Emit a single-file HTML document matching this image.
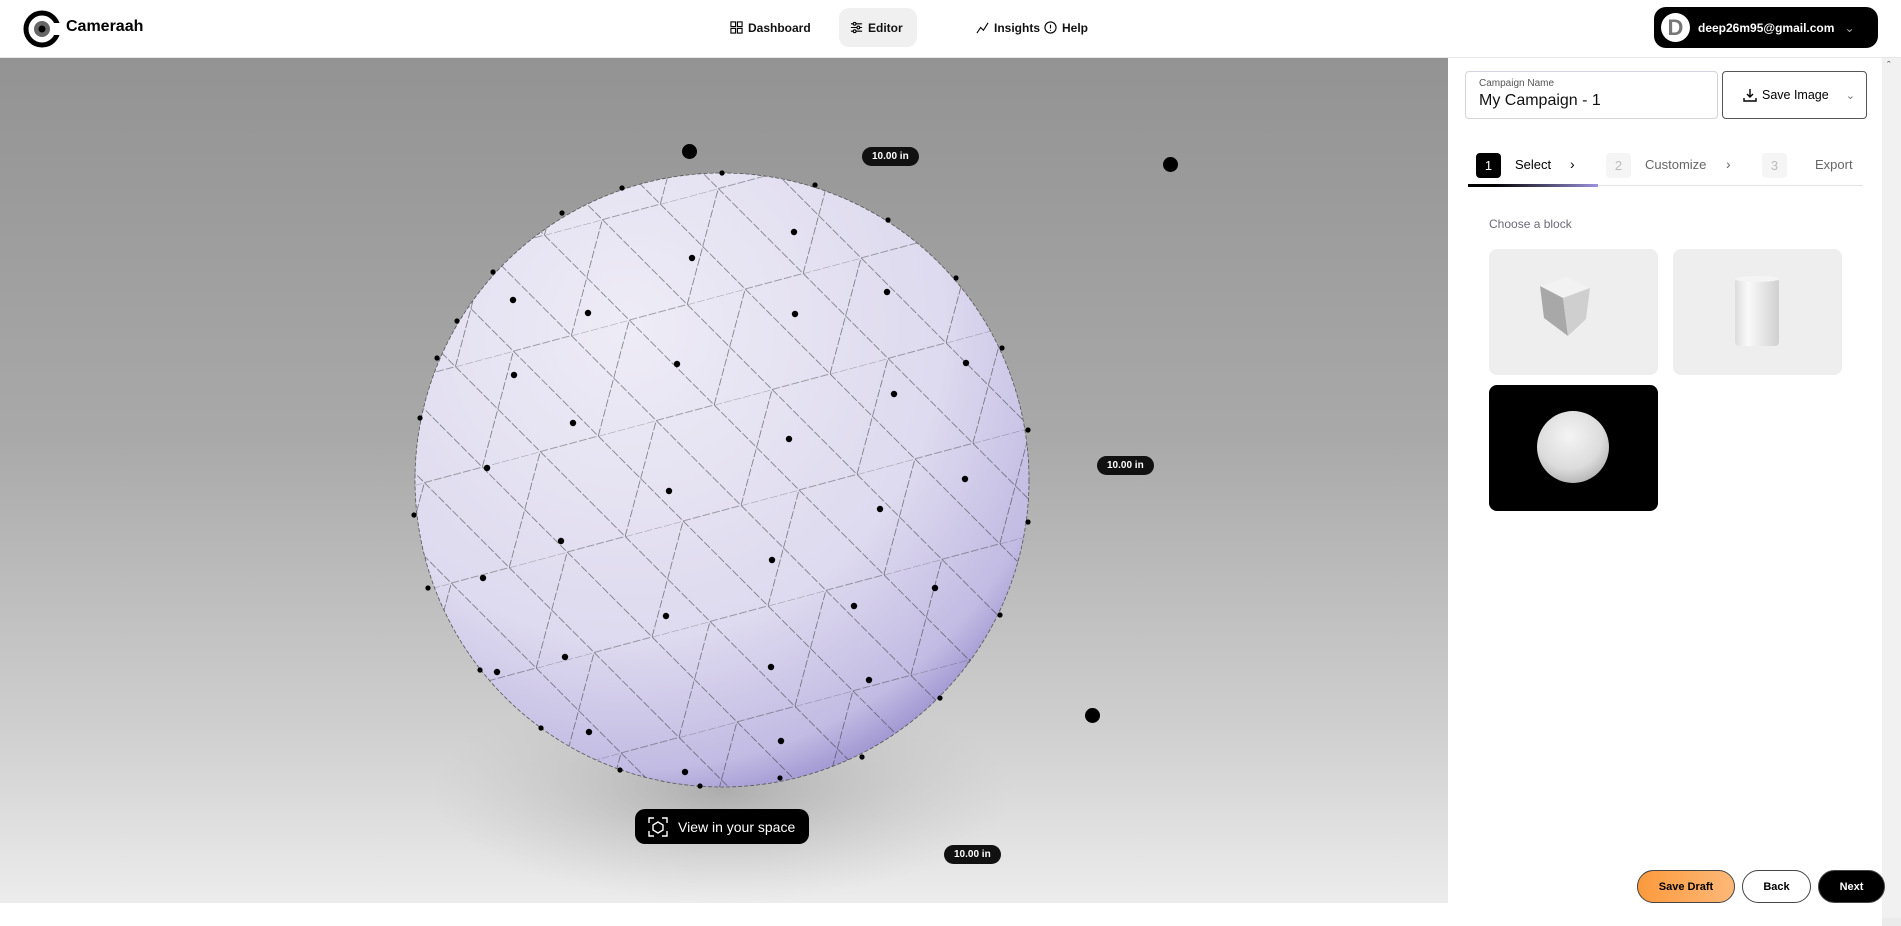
<!DOCTYPE html>
<html><head><meta charset="utf-8"><style>
*{margin:0;padding:0;box-sizing:border-box}
body{width:1901px;height:926px;overflow:hidden;background:#fff;font-family:"Liberation Sans",sans-serif;position:relative}
.hdr{position:absolute;left:0;top:0;width:1901px;height:58px;background:#fff;border-bottom:1px solid #e6e6e6}
.nav{position:absolute;top:8px;height:39px;display:flex;align-items:center;font-size:12px;font-weight:bold;color:#111;gap:5px}
.scene{position:absolute;left:0;top:58px;width:1448px;height:845px;background:linear-gradient(#939393 0%,#a9a9a9 45%,#d0d0d0 80%,#ececec 100%)}
.lbl{position:absolute;background:#111;color:#fff;font-size:10px;font-weight:bold;border-radius:10px;padding:4px 10px}
.dot{position:absolute;width:15px;height:15px;border-radius:50%;background:#000}
.panel{position:absolute;left:1448px;top:58px;width:434px;height:868px;background:#fff}
.card{position:absolute;width:169px;height:126px;border-radius:8px;background:#eee}
.btn{position:absolute;top:870px;height:33px;border-radius:17px;font-size:11px;font-weight:bold;display:flex;align-items:center;justify-content:center;border:1px solid #444}
</style></head><body>
<div class="hdr">
 <svg style="position:absolute;left:22px;top:9px" width="40" height="40" viewBox="0 0 40 40"><circle cx="20" cy="20" r="16" fill="none" stroke="#000" stroke-width="5"/><rect x="30" y="14" width="10" height="12" fill="#fff"/><circle cx="20" cy="20" r="8" fill="#666"/><circle cx="20" cy="20" r="3.5" fill="#000"/></svg>
 <div style="position:absolute;left:66px;top:18px;font-size:16px;font-weight:bold">Cameraah</div>
 <div class="nav" style="left:730px"><svg width="13" height="13" viewBox="0 0 14 14" fill="none" stroke="#000" stroke-width="1.2"><rect x="1" y="1" width="5" height="5"/><rect x="8" y="1" width="5" height="5"/><rect x="1" y="8" width="5" height="5"/><rect x="8" y="8" width="5" height="5"/></svg>Dashboard</div>
 <div class="nav" style="left:839px;width:78px;background:#f0f0f0;border-radius:10px;padding-left:11px"><svg width="13" height="13" viewBox="0 0 14 14" stroke="#000" stroke-width="1.2"><path d="M1 3h12M1 7h12M1 11h12"/><circle cx="5" cy="3" r="1.5" fill="#fff"/><circle cx="9" cy="7" r="1.5" fill="#fff"/><circle cx="5" cy="11" r="1.5" fill="#fff"/></svg>Editor</div>
 <div class="nav" style="left:976px"><svg width="13" height="13" viewBox="0 0 14 14" fill="none" stroke="#000" stroke-width="1.2"><path d="M1 13L5 7l3 3 5-8"/></svg>Insights</div>
 <div class="nav" style="left:1044px"><svg width="13" height="13" viewBox="0 0 14 14" fill="none" stroke="#000" stroke-width="1.2"><circle cx="7" cy="7" r="6"/><path d="M7 4v4M7 9.5v1"/></svg>Help</div>
 <div style="position:absolute;left:1654px;top:7px;width:224px;height:41px;background:#000;border-radius:12px;color:#fff;font-size:12px;font-weight:bold;display:flex;align-items:center">
  <div style="width:29px;height:29px;border-radius:50%;background:#fff;color:#777;margin:0 8px 0 7px;font-size:22px;display:flex;align-items:center;justify-content:center">D</div>deep26m95@gmail.com<span style="margin-left:10px;font-weight:normal;color:#aaa">&#8964;</span></div>
</div>
<div class="scene">
 <svg width="1448" height="845" style="position:absolute;left:0;top:0">
  <defs>
   <radialGradient id="sh" cx="50%" cy="50%" r="50%"><stop offset="0" stop-color="#9a9a9a" stop-opacity=".7"/><stop offset="1" stop-color="#bbb" stop-opacity="0"/></radialGradient>
   <radialGradient id="sp" cx="35%" cy="25%" r="85%"><stop offset="0" stop-color="#eeecf6"/><stop offset=".6" stop-color="#dedaef"/><stop offset=".85" stop-color="#c2bbe3"/><stop offset="1" stop-color="#857bc3"/></radialGradient>
   <clipPath id="cc"><circle cx="722" cy="422" r="307"/></clipPath>
   <pattern id="tri" width="120" height="104" patternUnits="userSpaceOnUse" patternTransform="rotate(-15)"><path d="M0 0H120M0 104L60 0L120 104M0 0L60 104M60 104H120" stroke="#222" stroke-width=".6" stroke-dasharray="8 2" fill="none"/></pattern>
  </defs>
  <ellipse cx="722" cy="733" rx="290" ry="110" fill="url(#sh)"/>
  <circle cx="722" cy="422" r="307" fill="url(#sp)"/>
  <g clip-path="url(#cc)"><rect x="380" y="100" width="700" height="650" fill="url(#tri)" opacity=".75"/></g>
  <circle cx="722" cy="422" r="307" fill="none" stroke="#555" stroke-width=".8" stroke-dasharray="4 2"/>
  <g fill="#000">
   <circle cx="588" cy="255" r="3.2"/><circle cx="677" cy="306" r="3.2"/><circle cx="789" cy="381" r="3.2"/><circle cx="669" cy="433" r="3.2"/><circle cx="561" cy="483" r="3.2"/><circle cx="772" cy="502" r="3.2"/><circle cx="666" cy="558" r="3.2"/><circle cx="565" cy="599" r="3.2"/><circle cx="514" cy="317" r="3.2"/><circle cx="573" cy="365" r="3.2"/><circle cx="487" cy="410" r="3.2"/><circle cx="483" cy="520" r="3.2"/><circle cx="692" cy="200" r="3.2"/><circle cx="795" cy="256" r="3.2"/><circle cx="894" cy="336" r="3.2"/><circle cx="880" cy="451" r="3.2"/><circle cx="854" cy="548" r="3.2"/><circle cx="771" cy="609" r="3.2"/><circle cx="781" cy="683" r="3.2"/><circle cx="869" cy="622" r="3.2"/><circle cx="935" cy="530" r="3.2"/><circle cx="965" cy="421" r="3.2"/><circle cx="966" cy="305" r="3.2"/><circle cx="887" cy="234" r="3.2"/><circle cx="794" cy="174" r="3.2"/><circle cx="513" cy="242" r="3.2"/><circle cx="589" cy="674" r="3.2"/><circle cx="685" cy="714" r="3.2"/><circle cx="497" cy="614" r="3.2"/>
   <circle cx="722" cy="115" r="2.6"/><circle cx="622" cy="130" r="2.6"/><circle cx="562" cy="155" r="2.6"/><circle cx="493" cy="214" r="2.6"/><circle cx="457" cy="263" r="2.6"/><circle cx="437" cy="300" r="2.6"/><circle cx="420" cy="360" r="2.6"/><circle cx="414" cy="457" r="2.6"/><circle cx="428" cy="530" r="2.6"/><circle cx="480" cy="612" r="2.6"/><circle cx="541" cy="670" r="2.6"/><circle cx="620" cy="712" r="2.6"/><circle cx="700" cy="728" r="2.6"/><circle cx="780" cy="720" r="2.6"/><circle cx="862" cy="699" r="2.6"/><circle cx="940" cy="640" r="2.6"/><circle cx="1000" cy="557" r="2.6"/><circle cx="1028" cy="464" r="2.6"/><circle cx="1028" cy="372" r="2.6"/><circle cx="1002" cy="290" r="2.6"/><circle cx="956" cy="220" r="2.6"/><circle cx="888" cy="162" r="2.6"/><circle cx="815" cy="127" r="2.6"/>
  </g>
 </svg>
 <div class="dot" style="left:682px;top:86px"></div>
 <div class="dot" style="left:1163px;top:99px"></div>
 <div class="dot" style="left:1085px;top:650px"></div>
 <div class="lbl" style="left:862px;top:89px">10.00 in</div>
 <div class="lbl" style="left:1097px;top:398px">10.00 in</div>
 <div class="lbl" style="left:944px;top:787px">10.00 in</div>
 <div style="position:absolute;left:635px;top:751px;width:174px;height:35px;background:#000;border-radius:10px;color:#fff;font-size:14px;display:flex;align-items:center;padding-left:13px;gap:10px">
  <svg width="20" height="20" viewBox="0 0 20 20" fill="none" stroke="#fff" stroke-width="1.4"><path d="M1 6V1h5M14 1h5v5M19 14v5h-5M6 19H1v-5"/><path d="M10 5l5 3v5l-5 3-5-3V8z"/></svg>View in your space</div>
</div>
<div style="position:absolute;left:0;top:903px;width:1448px;height:23px;background:#fff"></div>
<div style="position:absolute;left:1448px;top:58px;width:1px;height:868px;background:#ddd"></div>
<div class="panel">
 <div style="position:absolute;left:17px;top:13px;width:253px;height:48px;border:1px solid #d4d4dc;border-radius:4px">
  <div style="position:absolute;left:13px;top:6px;font-size:10px;color:#555">Campaign Name</div>
  <div style="position:absolute;left:13px;top:20px;font-size:16px;color:#111">My Campaign - 1</div></div>
 <div style="position:absolute;left:274px;top:13px;width:145px;height:48px;border:1px solid #555;border-radius:4px;display:flex;align-items:center;padding-left:20px;font-size:12.5px;gap:5px">
  <svg width="14" height="14" viewBox="0 0 14 14" fill="none" stroke="#000" stroke-width="1.4"><path d="M7 1v8M4 6l3 3 3-3M1 10v3h12v-3"/></svg>Save Image<span style="margin-left:12px;color:#777;font-size:11px">&#8964;</span></div>
 <div style="position:absolute;left:28px;top:95px;width:25px;height:25px;background:#000;color:#fff;border-radius:4px;font-size:13px;display:flex;align-items:center;justify-content:center">1</div>
 <div style="position:absolute;left:67px;top:99px;font-size:13px">Select</div>
 <div style="position:absolute;left:122px;top:98px;font-size:14px">&#8250;</div>
 <div style="position:absolute;left:158px;top:95px;width:25px;height:25px;background:#f5f5f5;color:#bbb;border-radius:4px;font-size:13px;display:flex;align-items:center;justify-content:center">2</div>
 <div style="position:absolute;left:197px;top:99px;font-size:13px;color:#666">Customize</div>
 <div style="position:absolute;left:278px;top:98px;font-size:14px;color:#666">&#8250;</div>
 <div style="position:absolute;left:314px;top:95px;width:25px;height:25px;background:#f5f5f5;color:#bbb;border-radius:4px;font-size:13px;display:flex;align-items:center;justify-content:center">3</div>
 <div style="position:absolute;left:367px;top:99px;font-size:13px;color:#666">Export</div>
 <div style="position:absolute;left:20px;top:127px;width:395px;height:1px;background:#e2e2e8"></div>
 <div style="position:absolute;left:20px;top:126px;width:130px;height:3px;background:linear-gradient(90deg,#000 20%,#9b92dd)"></div>
 <div style="position:absolute;left:41px;top:159px;font-size:12px;color:#6a6a7a">Choose a block</div>
 <div class="card" style="left:41px;top:191px"><svg width="169" height="126"><polygon points="51,37 78,28 101,39 74,49" fill="#f2f2f2"/><polygon points="51,37 74,49 79,87 55,69" fill="#a8a8a8"/><polygon points="74,49 101,39 97,70 79,87" fill="#cfcfcf"/></svg></div>
 <div class="card" style="left:225px;top:191px"><svg width="169" height="126"><defs><linearGradient id="cy"><stop offset="0" stop-color="#ddd"/><stop offset=".3" stop-color="#fafafa"/><stop offset="1" stop-color="#d0d0d0"/></linearGradient></defs><rect x="62" y="29" width="44" height="68" rx="4" fill="url(#cy)"/><ellipse cx="84" cy="30" rx="22" ry="3" fill="#f4f4f4"/></svg></div>
 <div class="card" style="left:41px;top:327px;background:#000"><svg width="169" height="126"><defs><radialGradient id="bs" cx="45%" cy="35%" r="65%"><stop offset="0" stop-color="#f4f4f4"/><stop offset=".7" stop-color="#dcdcdc"/><stop offset="1" stop-color="#b8b8b8"/></radialGradient></defs><circle cx="84" cy="62" r="36" fill="url(#bs)"/></svg></div>
</div>
<div style="position:absolute;left:1882px;top:58px;width:19px;height:868px;background:#ebebeb"></div>
<div style="position:absolute;left:1882px;top:58px;width:19px;height:860px;background:#f1f1f1"></div>
<div style="position:absolute;left:1887px;top:60px;font-size:11px;color:#555">&#710;</div>
<div class="btn" style="left:1637px;width:98px;background:linear-gradient(90deg,#fb9a3d,#fdb878)">Save Draft</div>
<div class="btn" style="left:1742px;width:69px;background:#fff">Back</div>
<div class="btn" style="left:1818px;width:67px;background:#000;color:#fff">Next</div>
</body></html>
